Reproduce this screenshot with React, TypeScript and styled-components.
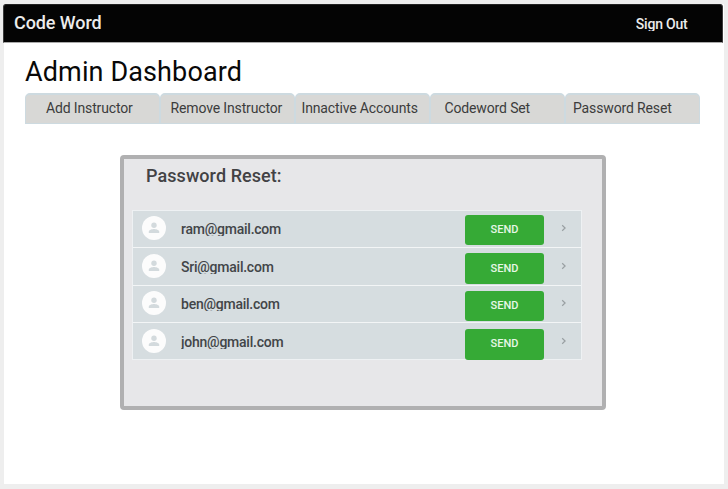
import React from "react";
import styled, { createGlobalStyle } from "styled-components";

const GlobalStyle = createGlobalStyle`
  * { box-sizing: border-box; }
  body { margin: 0; background: #eeeeee; font-family: Roboto, "Liberation Sans", sans-serif; }
  h1, h2, ul { margin: 0; padding: 0; font-weight: 400; }
`;

const Page = styled.div`
  height: 489px;
  padding: 4px 4px 5px;
  overflow: hidden;
`;

const Sheet = styled.main`
  height: 480px;
  background: #fff;
`;

const Header = styled.header`
  display: flex;
  justify-content: space-between;
  width: 720px;
  height: 38.5px;
  margin-left: -1px;
  padding: 0 34.5px 0 10px;
  background: #040404;
  border: 1px solid #3c3c3c;
  border-top-color: #222;
  border-bottom-color: #aaa;
  border-radius: 3px 3px 0 0;
`;

const Brand = styled.div`
  font-size: 18px;
  font-weight: 500;
  letter-spacing: -0.08px;
  line-height: 36px;
  color: #ececec;
`;

const SignOut = styled.a`
  height: 17px;
  margin-top: 9px;
  overflow: hidden;
  font-size: 14px;
  font-weight: 500;
  letter-spacing: -0.2px;
  line-height: 20px;
  color: #ececec;
`;

const Title = styled.h1`
  height: 50px;
  padding: 10px 0 0 21px;
  font-size: 27px;
  letter-spacing: 0.12px;
  line-height: 39px;
  color: #080808;
`;

const Tabs = styled.nav`
  display: grid;
  grid-template-columns: repeat(5, 1fr);
  width: 675px;
  margin-left: 21.4px;
`;

const Tab = styled.a<{ $indent: number }>`
  height: 31px;
  padding-left: ${(p) => p.$indent}px;
  border: 1px solid #cddae0;
  border-top-width: 2px;
  border-radius: 5px 5px 0 0;
  background: #d8d8d6;
  color: #3c3c3c;
  font-size: 14px;
  letter-spacing: -0.14px;
  line-height: 27px;
  white-space: nowrap;
`;

const Panel = styled.section`
  width: 486px;
  height: 255.5px;
  margin: 31px 0 0 116px;
  padding: 6px 0 0 9px;
  border: 4px solid #b0b0b1;
  border-radius: 4px;
  background: #e7e7e9;
`;

const PanelTitle = styled.h2`
  height: 45px;
  padding-left: 13px;
  font-size: 18px;
  font-weight: 500;
  letter-spacing: 0.07px;
  line-height: 21px;
  color: #424244;
`;

const List = styled.ul`
  width: 450px;
  margin-left: -1px;
  border: 1px solid #eef1f3;
  background: #d6dde0;
  list-style: none;
`;

const Row = styled.li`
  display: flex;
  height: 37.5px;
  padding-left: 9px;
  border-bottom: 1.5px solid #f3f5f6;
  &:last-child { height: 36px; border-bottom: 0; }
`;

const Avatar = styled.span`
  display: block;
  width: 24px;
  height: 24px;
  margin-top: 5.5px;
  border-radius: 50%;
  background: #fcfcfc;
  svg { display: block; }
`;

const Email = styled.span`
  width: 284px;
  height: 17px;
  margin: 8.5px 0 0 15px;
  overflow: hidden;
  font-size: 14px;
  font-weight: 500;
  letter-spacing: -0.24px;
  line-height: 20px;
  color: #424548;
`;

const SendButton = styled.button<{ $drop: number }>`
  width: 79px;
  height: 30.5px;
  margin-top: ${(p) => p.$drop}px;
  padding: 0;
  border: 0;
  border-radius: 3px;
  background: #36aa36;
  color: #e6f7e6;
  font: 500 11px/30px Roboto, "Liberation Sans", sans-serif;
`;

const Chevron = styled.svg`
  margin: 12.5px 0 0 16px;
`;

const tabs = [
  { label: "Add Instructor", indent: 19.6 },
  { label: "Remove Instructor", indent: 9.1 },
  { label: "Innactive Accounts", indent: 5.1 },
  { label: "Codeword Set", indent: 13.1 },
  { label: "Password Reset", indent: 6.6 },
];

const accounts = [
  { email: "ram@gmail.com", drop: 4 },
  { email: "Sri@gmail.com", drop: 5.25 },
  { email: "ben@gmail.com", drop: 5.25 },
  { email: "john@gmail.com", drop: 6 },
];

export default function App() {
  return (
    <Page>
      <GlobalStyle />
      <Sheet>
        <Header>
          <Brand>Code Word</Brand>
          <SignOut>Sign Out</SignOut>
        </Header>
        <Title>Admin Dashboard</Title>
        <Tabs>
          {tabs.map((t) => (
            <Tab key={t.label} $indent={t.indent}>{t.label}</Tab>
          ))}
        </Tabs>
        <Panel>
          <PanelTitle>Password Reset:</PanelTitle>
          <List>
            {accounts.map((a) => (
              <Row key={a.email}>
                <Avatar>
                  <svg width="24" height="24" viewBox="0 0 24 24" fill="#d3dadd">
                    <circle cx="12" cy="9.3" r="2.7" />
                    <path d="M6.8 17v-1.2c0-1.9 3.4-2.7 5.2-2.7s5.2.8 5.2 2.7V17z" />
                  </svg>
                </Avatar>
                <Email>{a.email}</Email>
                <SendButton $drop={a.drop}>SEND</SendButton>
                <Chevron width="8" height="10" viewBox="0 0 8 10" fill="none" stroke="#999fa2" strokeWidth="1.2">
                  <path d="M2.2 2.2 5.1 5 2.2 7.8" />
                </Chevron>
              </Row>
            ))}
          </List>
        </Panel>
      </Sheet>
    </Page>
  );
}
